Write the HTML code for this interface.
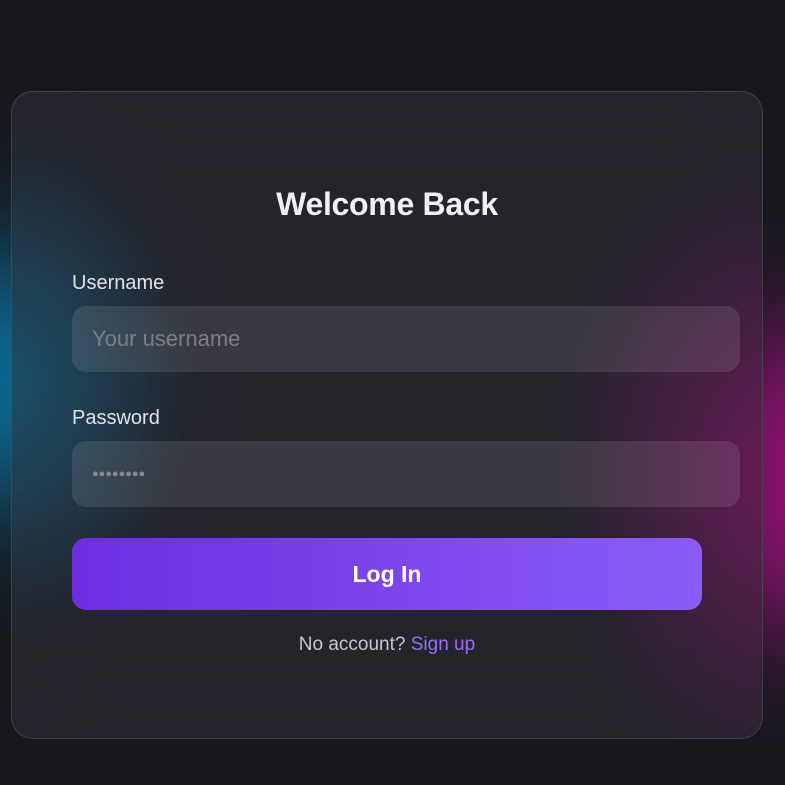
<!DOCTYPE html>
<html><head><meta charset="utf-8"><style>
html,body{margin:0;width:785px;height:785px;overflow:hidden;background:#17181e;font-family:"Liberation Sans",sans-serif;}
.g1{position:absolute;left:-120px;top:250px;width:200px;height:260px;border-radius:50%;background:#0a7fb0;filter:blur(60px);opacity:.9}
.g2{position:absolute;left:720px;top:320px;width:200px;height:320px;border-radius:50%;background:#b0108a;filter:blur(60px);opacity:.9}
.card{position:absolute;left:11px;top:91px;width:750px;height:646px;border-radius:22px;border:1px solid rgba(255,255,255,.13);background:rgba(40,40,48,.74);backdrop-filter:blur(40px);overflow:hidden}
.card:before{content:"";position:absolute;inset:0;background:radial-gradient(ellipse 180px 260px at 0 290px,rgba(20,110,150,.45),transparent),radial-gradient(ellipse 220px 320px at 760px 380px,rgba(140,20,110,.5),transparent)}
h1{position:absolute;left:0;width:750px;top:94px;margin:0;text-align:center;color:#f1f1f4;font-size:32px;font-weight:bold;letter-spacing:-.3px}
.l{position:absolute;left:60px;color:#e2e2e8;font-size:20px}
.i{position:absolute;left:60px;width:668px;height:66px;border-radius:14px;background:rgba(255,255,255,.1);color:#7d7d85;font-size:22px;line-height:66px;box-sizing:border-box;padding-left:20px}
.b{position:absolute;left:60px;top:446px;width:630px;height:72px;border-radius:14px;background:linear-gradient(90deg,#6d2ee0,#8b5cf6);color:#fff;font-weight:bold;font-size:23px;text-align:center;line-height:72px}
.s{position:absolute;left:0;width:750px;top:542px;text-align:center;color:#c7c7cf;font-size:19px}
.s span{color:#9b6cf8}
</style></head><body>
<div class="g1"></div><div class="g2"></div>
<div class="card">
<h1>Welcome Back</h1>
<div class="l" style="top:180px">Username</div>
<div class="i" style="top:214px">Your username</div>
<div class="l" style="top:315px">Password</div>
<div class="i" style="top:349px;font-size:11px;letter-spacing:0;color:#8a8a92">●●●●●●●●</div>
<div class="b">Log In</div>
<div class="s">No account? <span>Sign up</span></div>
</div>
</body></html>
